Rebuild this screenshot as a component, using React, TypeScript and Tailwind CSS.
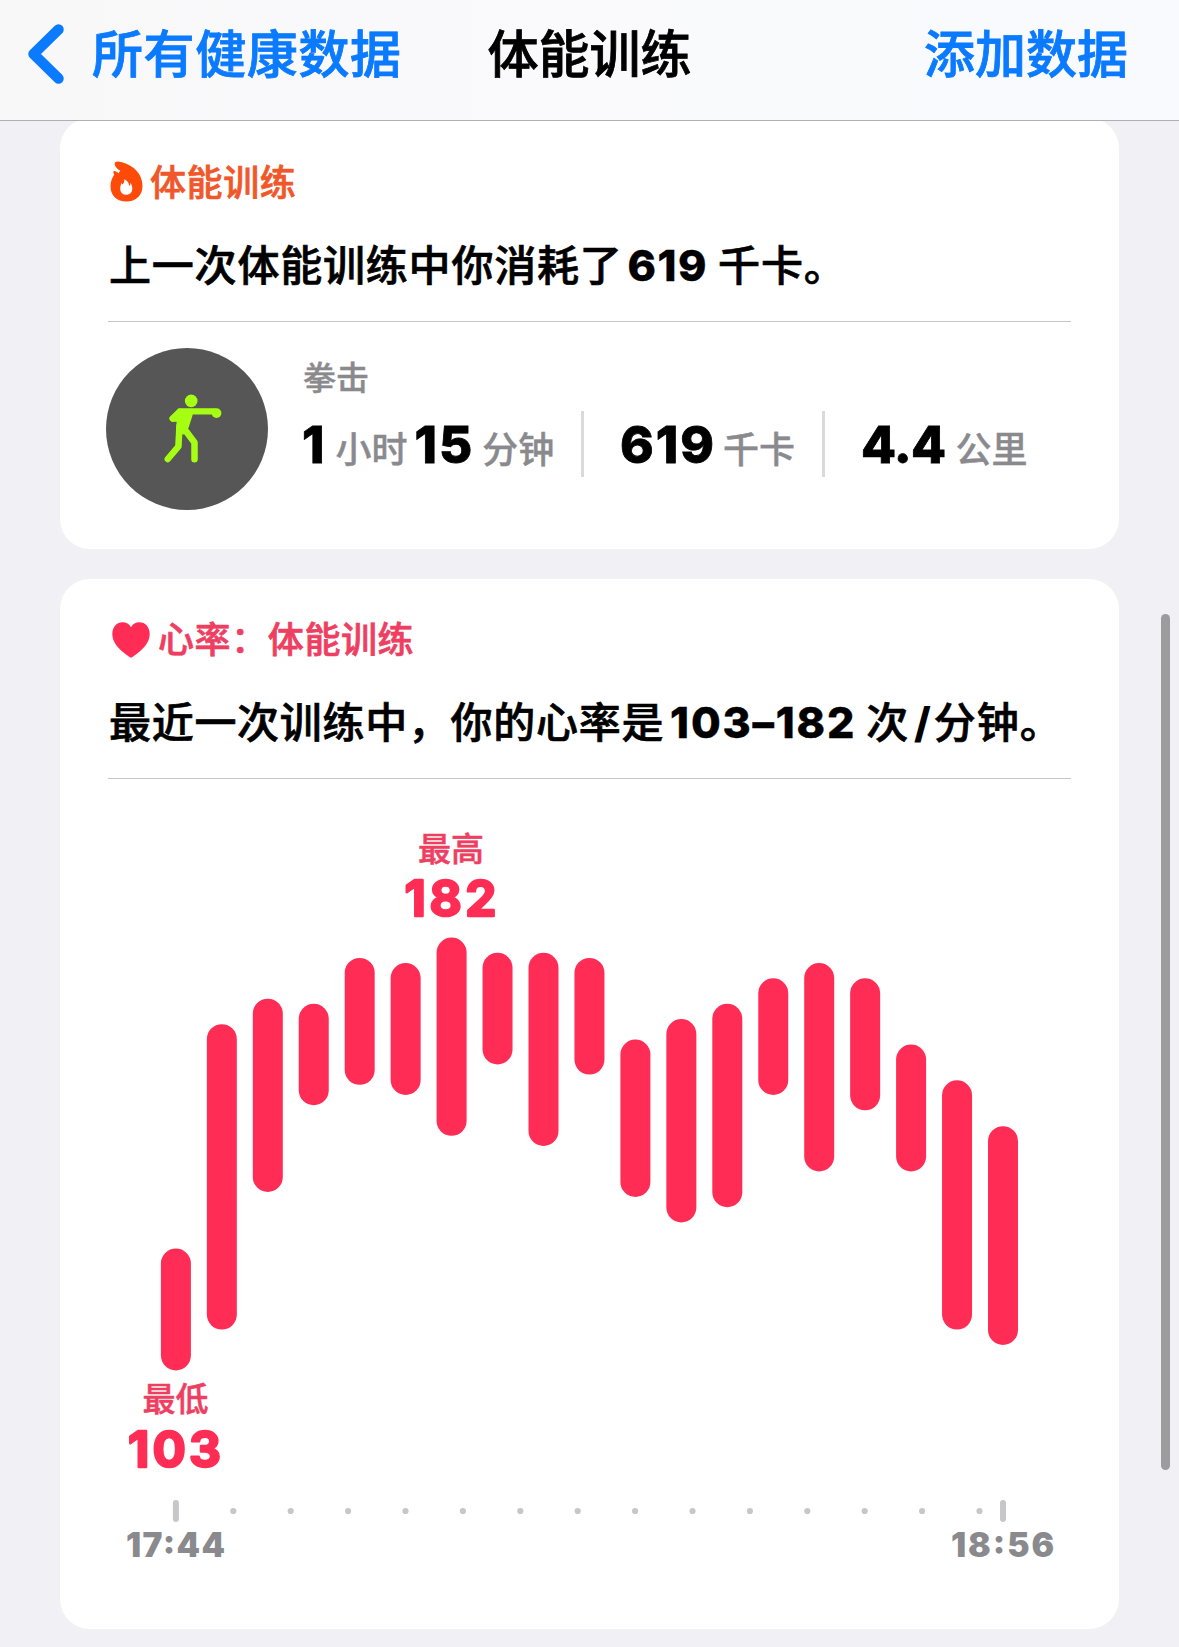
import type { ReactNode } from "react";

interface HeartRateBar {
  min: number;
  max: number;
}

const BARS: HeartRateBar[] = [
  { min: 103, max: 121 },
  { min: 111, max: 165 },
  { min: 138, max: 170 },
  { min: 155, max: 169 },
  { min: 159, max: 178 },
  { min: 157, max: 177 },
  { min: 149, max: 182 },
  { min: 163, max: 179 },
  { min: 147, max: 179 },
  { min: 161, max: 178 },
  { min: 137, max: 162 },
  { min: 132, max: 166 },
  { min: 135, max: 169 },
  { min: 157, max: 174 },
  { min: 142, max: 177 },
  { min: 154, max: 174 },
  { min: 142, max: 161 },
  { min: 111, max: 154 },
  { min: 108, max: 145 },
];

const PEAK = 182;
const BAR_WIDTH = 30;
const BAR_STEP = 45.95;
const FIRST_X = 67.9;
const PX_PER_BPM = 5.1;
const CHART_TOP = 173.5;
const DOT_STEP = 57.4;

// y of the centre of the rounded cap
function bpmToY(bpm: number): number {
  return CHART_TOP + (PEAK - bpm) * PX_PER_BPM;
}

function FlameIcon() {
  return (
    <svg width="33" height="41" viewBox="0 0 33 41" className="shrink-0">
      <path
        fill="#ff4b0a"
        fillRule="evenodd"
        d="M5.200 1.200C6.500.2 9 .3 12 1.200C24 4.500 32.500 13 32.500 25C32.500 34.500 26 40.500 16.500 40.500C7 40.500.5 34.500.5 25.500C.5 20.500 2 17 4.200 13.800C3.300 12.600 3.200 11.200 3.800 9.800C5.800 10.200 7.400 11 8.800 12.400C9.100 11.200 9.600 10.500 10.400 9.800C8 8.400 5.800 6.600 5 4.500C4.500 3 4.600 1.900 5.200 1.200ZM14.300 18.200C14.600 20.800 13.500 22.300 12.600 23.600C12 23.200 11.800 22.600 11.700 21.800C10.700 24 9.900 26.500 10.300 29C10.800 32 13 33.800 16.200 33.800C19.800 33.800 22.300 31.500 22.300 27.800C22.300 25.500 21.500 23.500 20.600 21.800C20.600 23.300 20.200 24.300 19.400 25C18.900 22 17.500 19.500 14.300 18.200Z"
      />
    </svg>
  );
}

function HeartIcon() {
  return (
    <svg width="38" height="36" viewBox="0 0 38 36" className="shrink-0">
      <path
        fill="#ff2d55"
        d="M19 35.500C18.200 35.500 17.500 34.900 16.500 34.200C7 27.800.3 20.500.3 12C.3 5 4.800.3 10.600.3C14.300.3 17.300 2.200 19 5.200C20.700 2.200 23.700.3 27.400.3C33.200.3 37.700 5 37.700 12C37.700 20.500 31 27.800 21.500 34.200C20.500 34.900 19.800 35.500 19 35.500Z"
      />
    </svg>
  );
}

function BoxingIcon() {
  return (
    <svg
      width="162"
      height="162"
      viewBox="0 0 162 162"
      fill="none"
      stroke="#a6ff12"
      strokeLinecap="round"
      strokeLinejoin="round"
    >
      <circle cx="85.200" cy="52.900" r="6.300" fill="#a6ff12" stroke="none" />
      <circle cx="110.500" cy="65.100" r="4.900" fill="#a6ff12" stroke="none" />
      <path d="M108 63.300H74L66.500 70.500" strokeWidth="6.200" />
      <path
        d="M72.500 61.200L86.500 62.700L86 67L82 79.500L77.500 86L70.500 84L71.300 73.200H66L68.500 67Z"
        fill="#a6ff12"
        strokeWidth="1.200"
      />
      <path d="M73.500 78L72.400 98.500L61.800 111" strokeWidth="6.500" />
      <path d="M78 80.500L88.500 94.500V111.300" strokeWidth="6.500" />
    </svg>
  );
}

function Card({ children, className }: { children: ReactNode; className: string }) {
  return (
    <section className={`mx-[60px] rounded-[30px] bg-white px-12 ${className}`}>
      {children}
    </section>
  );
}

function Value({ children, className = "tracking-[2px]" }: { children: ReactNode; className?: string }) {
  return (
    <span className={`text-[51px] font-extrabold text-black [-webkit-text-stroke:0.8px] ${className}`}>
      {children}
    </span>
  );
}

function Unit({ children, className = "" }: { children: ReactNode; className?: string }) {
  return (
    <span className={`text-[36px] font-medium text-[#8a8a8e] [-webkit-text-stroke:0.4px] ${className}`}>
      {children}
    </span>
  );
}

function StatDivider() {
  return <div className="h-[66px] w-[3px] shrink-0 bg-[#dadadc]" />;
}

function HeartRateChart() {
  const lastX = FIRST_X + (BARS.length - 1) * BAR_STEP;

  return (
    <svg width="963" height="850" viewBox="0 0 963 850" className="block">
      {BARS.map((bar, i) => (
        <line
          key={i}
          x1={FIRST_X + i * BAR_STEP}
          x2={FIRST_X + i * BAR_STEP}
          y1={bpmToY(bar.max)}
          y2={bpmToY(bar.min)}
          stroke="#ff2d55"
          strokeWidth={BAR_WIDTH}
          strokeLinecap="round"
        />
      ))}

      <g fill="#ee3f62" stroke="#ee3f62" strokeWidth="0.5" fontSize="33" fontWeight="500" textAnchor="middle">
        <text x="343" y="82.300">
          最高
        </text>
        <text x="67.500" y="632.300">
          最低
        </text>
      </g>

      <g
        fill="#ff2d55"
        stroke="#ff2d55"
        strokeWidth="2.400"
        strokeLinejoin="round"
        fontSize="49.500"
        fontWeight="700"
        textAnchor="middle"
      >
        <text x="342.500" y="136.500" textLength="92">
          182
        </text>
        <text x="66.500" y="688" textLength="93">
          103
        </text>
      </g>

      <g fill="#c7c7c9">
        <rect x={FIRST_X - 3} y="721" width="6" height="22" rx="3" />
        {Array.from({ length: 14 }, (_, i) => (
          <circle key={i} cx={FIRST_X + (i + 1) * DOT_STEP} cy="732" r="3.100" />
        ))}
        <rect x={lastX - 3} y="721" width="6" height="22" rx="3" />
      </g>

      <g fill="#8a8a8e" fontSize="33.500" fontWeight="900" textAnchor="middle">
        <text x="67.500" y="778" textLength="99">
          17:44
        </text>
        <text x={lastX - 0.5} y="778" textLength="103">
          18:56
        </text>
      </g>
    </svg>
  );
}

export default function App() {
  return (
    <div
      lang="zh-CN"
      className="relative flex h-[1647px] w-full flex-col overflow-hidden bg-[#f0f0f5] font-['Inter','Noto_Sans_CJK_SC',sans-serif] leading-none"
    >
      <header className="relative z-10 grid h-[121px] shrink-0 grid-cols-[1fr_auto_1fr] items-center border-b border-[#b0b0b3] bg-linear-to-r from-[#f8f8f9] via-[#fafafc] to-[#f8fafd] px-[27px] pb-[11px] text-[51px] font-medium whitespace-nowrap [-webkit-text-stroke:0.8px]">
        <button className="flex items-center gap-[27px] text-[#0a7aff]">
          <svg width="38" height="61" viewBox="0 0 38 61" fill="none">
            <path
              d="M31.500 5.500L6.500 30L31.500 54.500"
              stroke="#0a7aff"
              strokeWidth="10.500"
              strokeLinecap="round"
              strokeLinejoin="round"
            />
          </svg>
          <span className="tracking-[0.6px]">所有健康数据</span>
        </button>
        <h1>体能训练</h1>
        <button className="mr-[24px] justify-self-end text-[#0a7aff]">添加数据</button>
      </header>

      <main className="-mt-[3px] flex flex-col gap-[30px]">
        <Card className="h-[431px] pt-[43px]">
          <div className="flex h-[41px] items-center gap-[7px] pl-[2px] text-[36px] font-medium text-[#f0572a]">
            <FlameIcon />
            <span className="pt-[2px] tracking-[0.6px] [-webkit-text-stroke:0.7px]">体能训练</span>
          </div>
          <h2 className="mt-[43px] flex h-[42px] items-center pl-px text-[42px] font-medium whitespace-nowrap">
            <span className="tracking-[0.8px] [-webkit-text-stroke:0.7px]">上一次体能训练中你消耗了</span>
            <span className="ml-[5px] pb-[2px] text-[43px] font-extrabold tracking-[1.5px] [-webkit-text-stroke:0.4px]">619</span>
            <span className="ml-[10px] tracking-[0.9px] [-webkit-text-stroke:0.7px]">千卡。</span>
          </h2>
          <div className="mt-[34px] h-px bg-[#c6c6c8]" />

          <div className="-ml-[2px] mt-[26px] flex">
            <div className="size-[162px] shrink-0 rounded-full bg-[#565656]">
              <BoxingIcon />
            </div>
            <div className="ml-[34px] pt-[14px]">
              <div className="pl-px text-[33px] font-medium text-[#8a8a8e] [-webkit-text-stroke:0.4px]">拳击</div>
              <div className="mt-[16px] flex h-[66px] items-center whitespace-nowrap">
                <div className="flex w-[279px] items-baseline gap-[7px]">
                  <Value>1</Value>
                  <Unit className="ml-[2px]">小时</Unit>
                  <Value>15</Value>
                  <Unit className="ml-px">分钟</Unit>
                </div>
                <StatDivider />
                <div className="flex w-[238px] items-baseline gap-[7px] pl-[36px]">
                  <Value>619</Value>
                  <Unit>千卡</Unit>
                </div>
                <StatDivider />
                <div className="flex items-baseline gap-[10px] pl-[36px]">
                  <Value className="tracking-[-0.7px]">4.4</Value>
                  <Unit>公里</Unit>
                </div>
              </div>
            </div>
          </div>
        </Card>

        <Card className="h-[1050px] pt-[43px]">
          <div className="flex h-[36px] items-center gap-[8px] pl-[4px] text-[36px] font-medium text-[#ee3f62]">
            <HeartIcon />
            <span className="tracking-[0.6px] [-webkit-text-stroke:0.7px]">心率：体能训练</span>
          </div>
          <h2 className="mt-[44px] flex h-[42px] items-center pl-px text-[42px] font-medium whitespace-nowrap">
            <span className="tracking-[0.7px] [-webkit-text-stroke:0.7px]">最近一次训练中，你的心率是</span>
            <span className="ml-[6px] pb-[2px] text-[43px] font-extrabold tracking-[1.800px] [-webkit-text-stroke:0.4px]">103–182</span>
            <span className="ml-[10px] tracking-[0.9px] [-webkit-text-stroke:0.7px]">次</span>
            <span className="mr-[3px] ml-[5px] font-extrabold">/</span>
            <span className="tracking-[0.9px] [-webkit-text-stroke:0.7px]">分钟。</span>
          </h2>
          <div className="mt-[34px] h-px bg-[#c6c6c8]" />
          <HeartRateChart />
        </Card>
      </main>

      {/* scroll indicator */}
      <div className="absolute top-[614px] right-[9px] h-[856px] w-[9px] rounded-full bg-[#9c9c9e]" />
    </div>
  );
}
